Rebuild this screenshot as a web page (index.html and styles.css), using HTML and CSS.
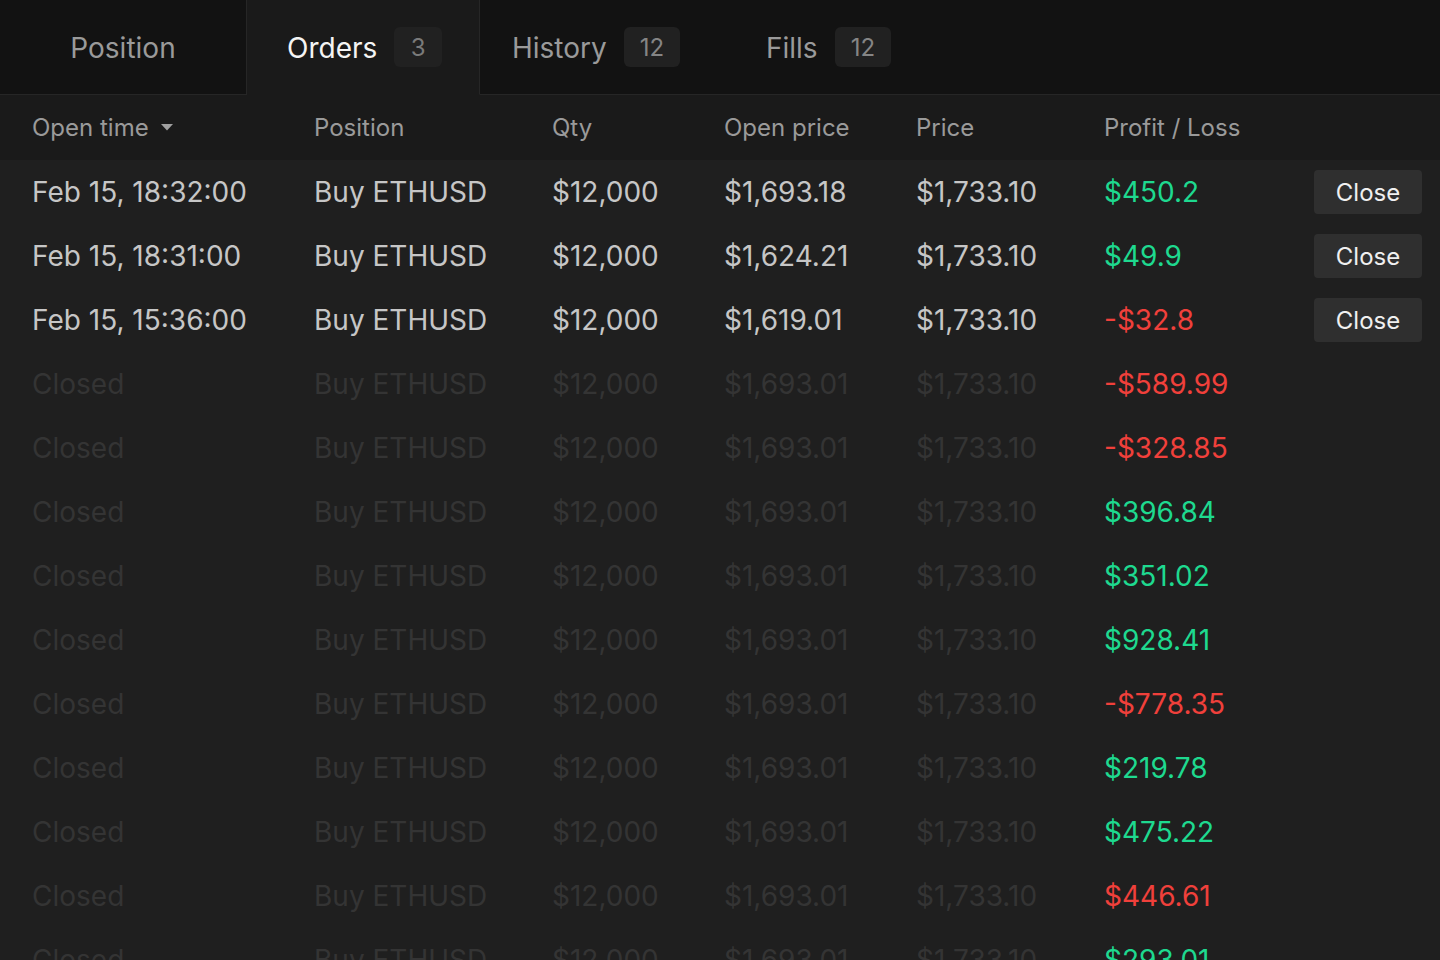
FILE: index.html
```html
<!DOCTYPE html>
<html lang="en">
<head>
<meta charset="utf-8">
<title>Orders</title>
<link rel="stylesheet" href="styles.css">
</head>
<body>
<div class="panel">
  <nav class="tabs">
    <div class="tab tab-position">Position</div>
    <div class="tab tab-orders active">Orders <span class="badge">3</span></div>
    <div class="tab tab-history">History <span class="badge">12</span></div>
    <div class="tab tab-fills">Fills <span class="badge">12</span></div>
    <div class="tabs-rest"></div>
  </nav>
  <div class="table">
    <div class="row head">
      <div class="cell">Open time <svg class="caret" width="12" height="7" viewBox="0 0 12 7"><path d="M0 0h12L6 6.5z" fill="currentColor"/></svg></div>
      <div class="cell">Position</div>
      <div class="cell">Qty</div>
      <div class="cell">Open price</div>
      <div class="cell">Price</div>
      <div class="cell">Profit / Loss</div>
      <div class="cell"></div>
    </div>
    <div class="row open">
      <div class="cell">Feb 15, 18:32:00</div><div class="cell">Buy ETHUSD</div><div class="cell">$12,000</div><div class="cell">$1,693.18</div><div class="cell">$1,733.10</div><div class="cell pos">$450.2</div><div class="cell"><button class="btn">Close</button></div>
    </div>
    <div class="row open">
      <div class="cell">Feb 15, 18:31:00</div><div class="cell">Buy ETHUSD</div><div class="cell">$12,000</div><div class="cell">$1,624.21</div><div class="cell">$1,733.10</div><div class="cell pos">$49.9</div><div class="cell"><button class="btn">Close</button></div>
    </div>
    <div class="row open">
      <div class="cell">Feb 15, 15:36:00</div><div class="cell">Buy ETHUSD</div><div class="cell">$12,000</div><div class="cell">$1,619.01</div><div class="cell">$1,733.10</div><div class="cell neg">-$32.8</div><div class="cell"><button class="btn">Close</button></div>
    </div>
    <div class="row closed"><div class="cell">Closed</div><div class="cell">Buy ETHUSD</div><div class="cell">$12,000</div><div class="cell">$1,693.01</div><div class="cell">$1,733.10</div><div class="cell neg">-$589.99</div><div class="cell"></div></div>
    <div class="row closed"><div class="cell">Closed</div><div class="cell">Buy ETHUSD</div><div class="cell">$12,000</div><div class="cell">$1,693.01</div><div class="cell">$1,733.10</div><div class="cell neg">-$328.85</div><div class="cell"></div></div>
    <div class="row closed"><div class="cell">Closed</div><div class="cell">Buy ETHUSD</div><div class="cell">$12,000</div><div class="cell">$1,693.01</div><div class="cell">$1,733.10</div><div class="cell pos">$396.84</div><div class="cell"></div></div>
    <div class="row closed"><div class="cell">Closed</div><div class="cell">Buy ETHUSD</div><div class="cell">$12,000</div><div class="cell">$1,693.01</div><div class="cell">$1,733.10</div><div class="cell pos">$351.02</div><div class="cell"></div></div>
    <div class="row closed"><div class="cell">Closed</div><div class="cell">Buy ETHUSD</div><div class="cell">$12,000</div><div class="cell">$1,693.01</div><div class="cell">$1,733.10</div><div class="cell pos">$928.41</div><div class="cell"></div></div>
    <div class="row closed"><div class="cell">Closed</div><div class="cell">Buy ETHUSD</div><div class="cell">$12,000</div><div class="cell">$1,693.01</div><div class="cell">$1,733.10</div><div class="cell neg">-$778.35</div><div class="cell"></div></div>
    <div class="row closed"><div class="cell">Closed</div><div class="cell">Buy ETHUSD</div><div class="cell">$12,000</div><div class="cell">$1,693.01</div><div class="cell">$1,733.10</div><div class="cell pos">$219.78</div><div class="cell"></div></div>
    <div class="row closed"><div class="cell">Closed</div><div class="cell">Buy ETHUSD</div><div class="cell">$12,000</div><div class="cell">$1,693.01</div><div class="cell">$1,733.10</div><div class="cell pos">$475.22</div><div class="cell"></div></div>
    <div class="row closed"><div class="cell">Closed</div><div class="cell">Buy ETHUSD</div><div class="cell">$12,000</div><div class="cell">$1,693.01</div><div class="cell">$1,733.10</div><div class="cell neg">$446.61</div><div class="cell"></div></div>
    <div class="row closed"><div class="cell">Closed</div><div class="cell">Buy ETHUSD</div><div class="cell">$12,000</div><div class="cell">$1,693.01</div><div class="cell">$1,733.10</div><div class="cell pos">$293.01</div><div class="cell"></div></div>
  </div>
</div>
</body>
</html>
```
FILE: styles.css
```css
* { box-sizing: border-box; }
html, body {
  margin: 0;
  height: 100%;
  background: #1f1f1f;
  overflow: hidden;
}
body {
  font-family: Inter, "Noto Sans", sans-serif;
  color: #c4c4c4;
}
.panel {
  width: 1440px;
  height: 960px;
  overflow: hidden;
  display: flex;
  flex-direction: column;
}
.tabs {
  display: flex;
  height: 95px;
  flex-shrink: 0;
}
.tab {
  display: flex;
  align-items: center;
  padding-top: 2px;
  font-size: 28px;
  color: #9a9a9a;
  background: #121212;
  border-bottom: 1px solid #262626;
  white-space: nowrap;
}
.tab-position {
  width: 247px;
  justify-content: center;
  border-right: 1px solid #262626;
}
.tab-orders {
  width: 233px;
  padding-left: 40px;
  border-right: 1px solid #262626;
}
.tab-history {
  width: 254px;
  padding-left: 32px;
}
.tab-fills {
  padding-left: 32px;
  padding-right: 40px;
}
.tab.active {
  background: #1a1a1a;
  color: #f4f4f4;
  border-bottom-color: transparent;
}
.tabs-rest {
  flex: 1;
  background: #121212;
  border-bottom: 1px solid #262626;
}
.badge {
  display: inline-flex;
  align-items: center;
  justify-content: center;
  height: 40px;
  min-width: 48px;
  padding: 0 16px;
  margin-left: 17px;
  margin-top: -2px;
  border-radius: 6px;
  background: #212121;
  color: #7a7a7a;
  font-size: 24px;
}
.tab-history .badge, .tab-fills .badge { color: #858585; }
.table {
  display: flex;
  flex-direction: column;
}
.row {
  display: grid;
  grid-template-columns: 282px 238px 172px 192px 188px 1fr 108px;
  align-items: center;
  padding: 0 18px 0 32px;
  height: 64px;
  font-size: 28px;
  white-space: nowrap;
}
.row.head {
  height: 65px;
  background: #1a1a1a;
  font-size: 24px;
  color: #9a9a9a;
}
.caret {
  margin-left: 6px;
  vertical-align: middle;
  position: relative;
  top: -2px;
  color: #a0a0a0;
}
.row.open { color: #c6c6c6; }
.row.closed { color: #343434; }
.pos { color: #1ed98f; }
.neg { color: #f0403b; }
.btn {
  width: 108px;
  height: 44px;
  border: 0;
  border-radius: 4px;
  background: #2f2f2f;
  color: #f0f0f0;
  font-family: Inter, "Noto Sans", sans-serif;
  font-size: 24px;
  padding: 0;
  cursor: pointer;
}
```
